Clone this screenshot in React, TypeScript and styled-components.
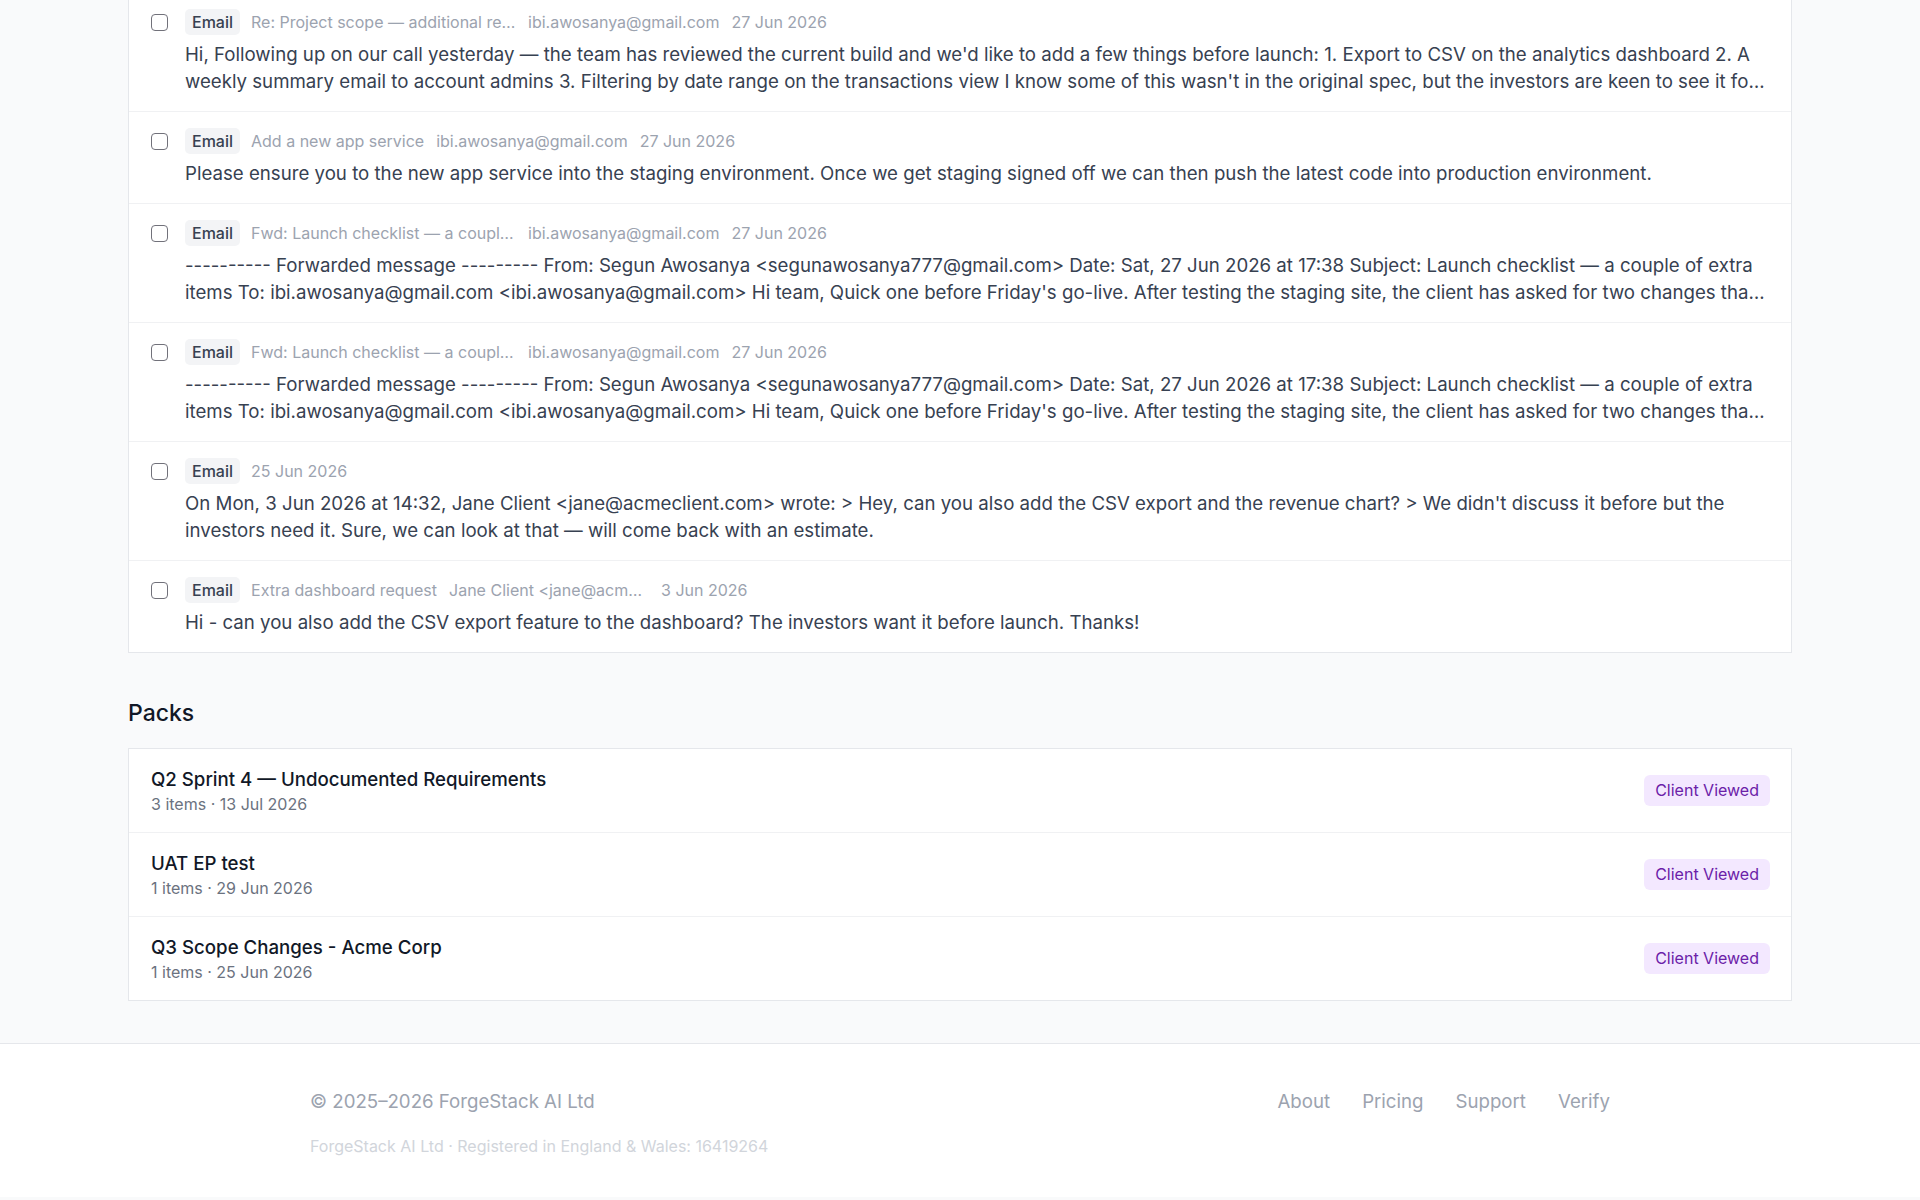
import * as React from 'react'
import styled, { createGlobalStyle } from 'styled-components'

const GlobalStyle = createGlobalStyle`
  html, body {
    margin: 0;
    padding: 0;
    background: #f9fafb;
    font-family: Inter, "Noto Sans", "Liberation Sans", sans-serif;
    -webkit-font-smoothing: antialiased;
  }
  * {
    box-sizing: border-box;
  }
`

const Page = styled.div`
  min-height: 100vh;
  display: flex;
  flex-direction: column;
  background: #f9fafb;
  overflow: hidden;
`

const Main = styled.main`
  width: 100%;
  max-width: 1664px;
  margin: 0 auto;
  padding-bottom: 42px;
`

const Card = styled.div<{ $offset?: number }>`
  background: #ffffff;
  border: 1px solid #e5e7eb;
  margin-top: ${(p) => p.$offset ?? 0}px;
`

const ItemRow = styled.div`
  display: flex;
  align-items: flex-start;
  gap: 17px;
  padding: 16px 26px 16px 22px;
  border-top: 1px solid #f0f1f3;
  &:first-child {
    border-top: none;
  }
`

const CheckBox = styled.input.attrs({ type: 'checkbox' })`
  appearance: none;
  flex: none;
  width: 17px;
  height: 17px;
  margin: 5px 0 0;
  border: 1.5px solid #71717a;
  border-radius: 4px;
  background: #fff;
`

const ItemBody = styled.div`
  flex: 1;
  min-width: 0;
  display: flex;
  flex-direction: column;
  gap: 6px;
`

const MetaLine = styled.div`
  display: flex;
  align-items: center;
  gap: 12px;
  height: 26px;
  font-size: 16px;
  color: #9ca3af;
`

const SourceBadge = styled.span`
  display: inline-flex;
  align-items: center;
  height: 26px;
  padding: 0 7px;
  margin-right: -1px;
  border-radius: 5px;
  background: #f3f4f6;
  color: #374151;
  font-weight: 500;
  font-size: 16px;
`

const MetaText = styled.span<{ $max?: number }>`
  white-space: nowrap;
  overflow: hidden;
  text-overflow: ellipsis;
  max-width: ${(p) => (p.$max ? `${p.$max}px` : 'none')};
`

const Snippet = styled.p`
  margin: 0;
  font-size: 18.67px;
  line-height: 27px;
  color: #374151;
  display: -webkit-box;
  -webkit-line-clamp: 2;
  -webkit-box-orient: vertical;
  overflow: hidden;
`

const SectionTitle = styled.h2`
  margin: 45px 0 20px;
  font-size: 23px;
  line-height: 30px;
  font-weight: 500;
  color: #111827;
`

const PackRow = styled.div`
  display: flex;
  align-items: center;
  justify-content: space-between;
  padding: 17px 21px 17px 22px;
  border-top: 1px solid #f0f1f3;
  &:first-child {
    border-top: none;
  }
`

const PackInfo = styled.div`
  display: flex;
  flex-direction: column;
`

const PackName = styled.div`
  font-size: 18.67px;
  line-height: 27px;
  font-weight: 500;
  color: #111827;
`

const PackMeta = styled.div`
  font-size: 16px;
  line-height: 22px;
  color: #6b7280;
`

const StatusPill = styled.span`
  padding: 5px 11px;
  border-radius: 6px;
  background: #f3e8ff;
  color: #6b21a8;
  font-size: 16px;
  line-height: 21px;
`

const Footer = styled.footer`
  background: #ffffff;
  border-top: 1px solid #e5e7eb;
  padding: 44px 0 40px;
`

const FooterInner = styled.div`
  max-width: 1300px;
  margin: 0 auto;
  display: flex;
  flex-direction: column;
  gap: 20px;
`

const FooterTop = styled.div`
  display: flex;
  align-items: center;
  justify-content: space-between;
  font-size: 18.67px;
  line-height: 27px;
  color: #9ca3af;
`

const FooterLinks = styled.nav`
  display: flex;
  gap: 32px;
  a {
    color: #9ca3af;
    text-decoration: none;
  }
`

const Legal = styled.div`
  font-size: 16px;
  line-height: 22px;
  color: #d1d5db;
`

type Item = {
  subject?: string
  sender?: string
  date: string
  body: string
}

const forwarded =
  "---------- Forwarded message --------- From: Segun Awosanya <segunawosanya777@gmail.com> Date: Sat, 27 Jun 2026 at 17:38 Subject: Launch checklist — a couple of extra items To: ibi.awosanya@gmail.com <ibi.awosanya@gmail.com> Hi team, Quick one before Friday's go-live. After testing the staging site, the client has asked for two changes that weren't part of the original scope."

const items: Item[] = [
  {
    subject: 'Re: Project scope — additional requirements',
    sender: 'ibi.awosanya@gmail.com',
    date: '27 Jun 2026',
    body: "Hi, Following up on our call yesterday — the team has reviewed the current build and we'd like to add a few things before launch: 1. Export to CSV on the analytics dashboard 2. A weekly summary email to account admins 3. Filtering by date range on the transactions view I know some of this wasn't in the original spec, but the investors are keen to see it for the demo.",
  },
  {
    subject: 'Add a new app service',
    sender: 'ibi.awosanya@gmail.com',
    date: '27 Jun 2026',
    body: 'Please ensure you to the new app service into the staging environment. Once we get staging signed off we can then push the latest code into production environment.',
  },
  {
    subject: 'Fwd: Launch checklist — a couple of extra items',
    sender: 'ibi.awosanya@gmail.com',
    date: '27 Jun 2026',
    body: forwarded,
  },
  {
    subject: 'Fwd: Launch checklist — a couple of extra items',
    sender: 'ibi.awosanya@gmail.com',
    date: '27 Jun 2026',
    body: forwarded,
  },
  {
    date: '25 Jun 2026',
    body: "On Mon, 3 Jun 2026 at 14:32, Jane Client <jane@acmeclient.com> wrote: > Hey, can you also add the CSV export and the revenue chart? > We didn't discuss it before but the investors need it. Sure, we can look at that — will come back with an estimate.",
  },
  {
    subject: 'Extra dashboard request',
    sender: 'Jane Client <jane@acmeclient.com>',
    date: '3 Jun 2026',
    body: 'Hi - can you also add the CSV export feature to the dashboard? The investors want it before launch. Thanks!',
  },
]

const packs = [
  { name: 'Q2 Sprint 4 — Undocumented Requirements', meta: '3 items · 13 Jul 2026' },
  { name: 'UAT EP test', meta: '1 items · 29 Jun 2026' },
  { name: 'Q3 Scope Changes - Acme Corp', meta: '1 items · 25 Jun 2026' },
]

const ItemEntry: React.FunctionComponent<Item> = ({ subject, sender, date, body }) => (
  <ItemRow>
    <CheckBox readOnly />
    <ItemBody>
      <MetaLine>
        <SourceBadge>Email</SourceBadge>
        {subject && <MetaText $max={265}>{subject}</MetaText>}
        {sender && <MetaText $max={200}>{sender}</MetaText>}
        <MetaText>{date}</MetaText>
      </MetaLine>
      <Snippet>{body}</Snippet>
    </ItemBody>
  </ItemRow>
)

export default function App() {
  return (
    <Page>
      <GlobalStyle />
      <Main>
        <Card $offset={-8}>
          {items.map((item, index) => (
            <ItemEntry key={index} {...item} />
          ))}
        </Card>

        <SectionTitle>Packs</SectionTitle>
        <Card>
          {packs.map((pack) => (
            <PackRow key={pack.name}>
              <PackInfo>
                <PackName>{pack.name}</PackName>
                <PackMeta>{pack.meta}</PackMeta>
              </PackInfo>
              <StatusPill>Client Viewed</StatusPill>
            </PackRow>
          ))}
        </Card>
      </Main>

      <Footer>
        <FooterInner>
          <FooterTop>
            <span>© 2025–2026 ForgeStack AI Ltd</span>
            <FooterLinks>
              <a href="#about">About</a>
              <a href="#pricing">Pricing</a>
              <a href="#support">Support</a>
              <a href="#verify">Verify</a>
            </FooterLinks>
          </FooterTop>
          <Legal>ForgeStack AI Ltd · Registered in England &amp; Wales: 16419264</Legal>
        </FooterInner>
      </Footer>
    </Page>
  )
}
